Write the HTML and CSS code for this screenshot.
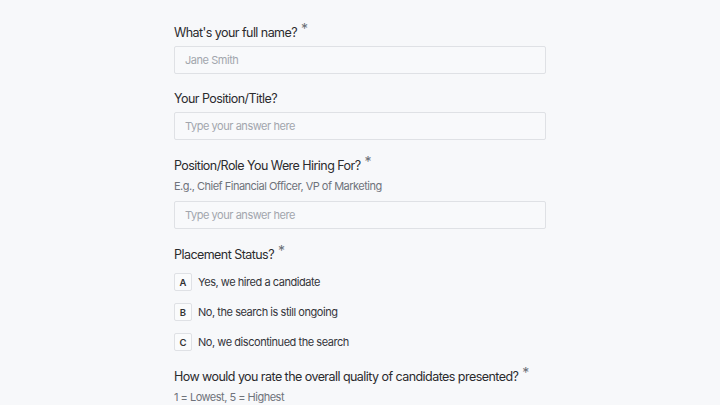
FILE: index.html
```html
<!DOCTYPE html>
<html>
<head>
<meta charset="utf-8">
<link rel="stylesheet" href="styles.css">
</head>
<body>
<main class="form">
  <section class="q">
    <div class="label">What's your full name? <span class="req">*</span></div>
    <div class="input">Jane Smith</div>
  </section>
  <section class="q">
    <div class="label">Your Position/Title?</div>
    <div class="input">Type your answer here</div>
  </section>
  <section class="q">
    <div class="label">Position/Role You Were Hiring For? <span class="req">*</span></div>
    <div class="desc">E.g., Chief Financial Officer, VP of Marketing</div>
    <div class="input">Type your answer here</div>
  </section>
  <section class="q">
    <div class="label">Placement Status? <span class="req">*</span></div>
    <div class="options">
      <div class="opt"><span class="key">A</span><span>Yes, we hired a candidate</span></div>
      <div class="opt"><span class="key">B</span><span>No, the search is still ongoing</span></div>
      <div class="opt"><span class="key">C</span><span>No, we discontinued the search</span></div>
    </div>
  </section>
  <section class="q">
    <div class="label">How would you rate the overall quality of candidates presented? <span class="req">*</span></div>
    <div class="desc">1 = Lowest, 5 = Highest</div>
  </section>
</main>
</body>
</html>
```

FILE: styles.css
```css
html, body {
  margin: 0;
  padding: 0;
  background: #f7f8fa;
}
body {
  font-family: Inter, "Noto Sans", sans-serif;
  color: #27272a;
  height: 405px;
  overflow: hidden;
}
.form {
  width: 372px;
  margin-left: 174px;
  padding-top: 23px;
  display: flex;
  flex-direction: column;
  gap: 16px;
}
.q {
  display: flex;
  flex-direction: column;
}
.label {
  font-size: 12.5px;
  line-height: 18px;
  letter-spacing: -0.55px;
  color: #2b2b2e;
  white-space: nowrap;
}
.req {
  color: #6b6f76;
  font-size: 14px;
  position: relative;
  top: -3px;
  margin-left: 1px;
}
.desc {
  font-size: 11px;
  line-height: 14px;
  letter-spacing: -0.5px;
  color: #6f737b;
  margin-top: 4px;
}
.input {
  margin-top: 4px;
  height: 26px;
  border: 1px solid #dfe1e5;
  border-radius: 2px;
  background: #f8f9fb;
  font-size: 11px;
  line-height: 26px;
  letter-spacing: -0.45px;
  padding: 0 10px;
  color: #a2a6ad;
}
.desc + .input { margin-top: 8px; }
.options {
  display: flex;
  flex-direction: column;
  gap: 12px;
  margin-top: 9px;
}
.opt {
  display: flex;
  align-items: center;
  gap: 6px;
  height: 18px;
  font-size: 11px;
  letter-spacing: -0.45px;
  color: #34353a;
}
.key {
  width: 16px;
  height: 16px;
  border: 1px solid #dfe1e5;
  border-radius: 2px;
  background: #fafbfc;
  display: flex;
  align-items: center;
  justify-content: center;
  font-size: 9.5px;
  font-weight: 600;
  letter-spacing: 0;
  color: #333;
}
```
